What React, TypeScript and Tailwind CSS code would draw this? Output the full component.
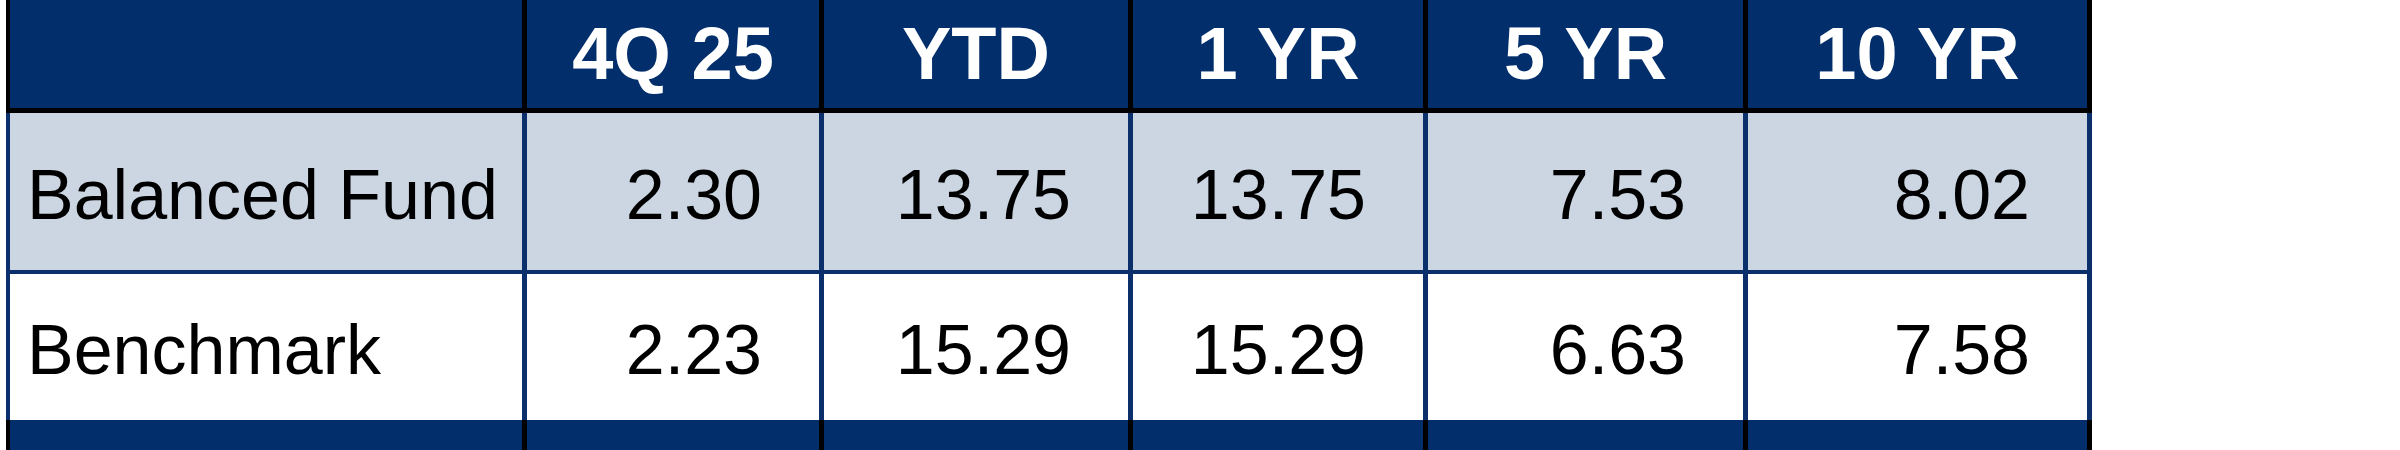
const columns = ["4Q 25", "YTD", "1 YR", "5 YR", "10 YR"];

const rows = [
  { name: "Balanced Fund", values: ["2.30", "13.75", "13.75", "7.53", "8.02"], shaded: true },
  { name: "Benchmark", values: ["2.23", "15.29", "15.29", "6.63", "7.58"], shaded: false },
];

// widths include the 5px right border of each cell
const widths = ["w-[297px]", "w-[309px]", "w-[295px]", "w-[320px]", "w-[344px]"];

export default function App() {
  return (
    <div className="w-[2400px] h-[450px] overflow-hidden bg-white font-['Liberation_Sans',Arial,sans-serif]">
      <div className="ml-[6px] w-[2086px] flex flex-col">
        {/* Header */}
        <div className="flex h-[113px] bg-[#022e6b] border-l-4 border-b-[5px] border-black">
          <div className="w-[517px] border-r-[5px] border-black" />
          {columns.map((col, i) => (
            <div
              key={col}
              className={`${widths[i]} border-r-[5px] border-black flex items-center justify-center text-white font-bold text-[74px] leading-none`}
            >
              {col}
            </div>
          ))}
        </div>

        {/* Body rows */}
        {rows.map((row) => (
          <div
            key={row.name}
            className={`flex border-l-4 border-[#0b2f6a] ${row.shaded ? "bg-[#ccd6e3] h-[161px] border-b-4" : "bg-white h-[146px]"}`}
          >
            <div className="w-[517px] border-r-[5px] border-[#0b2f6a] flex items-center pl-[17px] pt-[6px] text-black text-[70px] leading-none">
              {row.name}
            </div>
            {row.values.map((v, i) => (
              <div
                key={i}
                className={`${widths[i]} border-r-[5px] border-[#0b2f6a] flex items-center justify-end pr-[57px] pt-[6px] text-black text-[70px] leading-none`}
              >
                {v}
              </div>
            ))}
          </div>
        ))}

        {/* Footer band */}
        <div className="flex h-[40px] bg-[#022e6b] border-l-4 border-black">
          <div className="w-[517px] border-r-[5px] border-black" />
          {widths.map((w, i) => (
            <div key={i} className={`${w} border-r-[5px] border-black`} />
          ))}
        </div>
      </div>
    </div>
  );
}
